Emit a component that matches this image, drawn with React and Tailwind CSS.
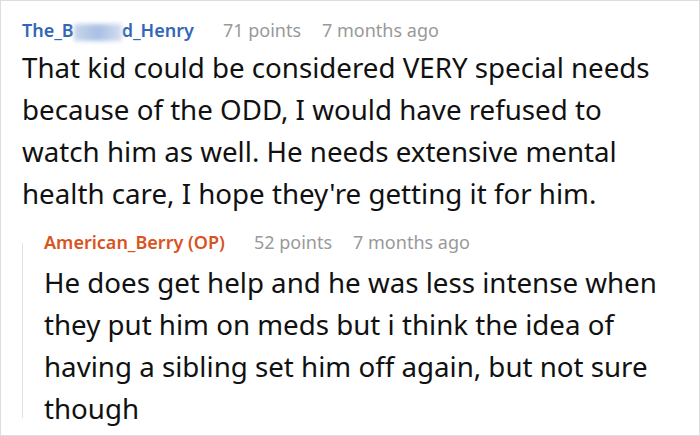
import React from 'react';

const Meta = ({ name, points, time, nameClass }) => (
  <div className="flex items-baseline text-[18px] leading-[24px]">
    <span className={`font-semibold ${nameClass}`}>{name}</span>
    <span className="ml-[29px] text-[#999999]">{points}</span>
    <span className="ml-[21px] text-[#999999]">{time}</span>
  </div>
);

export default function App() {
  return (
    <div
      className="w-[700px] h-[436px] border border-[#dddddd] bg-white text-[#111111] overflow-hidden"
      style={{ fontFamily: '"Noto Sans", "Open Sans", sans-serif' }}
    >
      <div className="pl-[21px] pr-[28px] pt-[17px]">
        <Meta
          name={
            <span>
              The_B
              <span className="inline-block w-[48px] h-[17px] align-middle bg-gradient-to-r from-[#c9d6ec] via-[#a9bfe3] to-[#d5dff0] blur-[2px]" />
              d_Henry
            </span>
          }
          points="71 points"
          time="7 months ago"
          nameClass="text-[#3466b6]"
        />
        <p className="mt-[4px] text-[27.7px] leading-[42px]">
          That kid could be considered VERY special needs because of the ODD, I would have refused to
          watch him as well. He needs extensive mental health care, I hope they're getting it for him.
        </p>
      </div>
      <div className="flex ml-[21px] mt-[16px] pr-[28px]">
        <div className="w-px shrink-0 mt-[13px] h-[175px] bg-[#e2e2e2]" />
        <div className="ml-[21px]">
          <Meta
            name="American_Berry (OP)"
            points="52 points"
            time="7 months ago"
            nameClass="text-[#d9531e]"
          />
          <p className="mt-[7px] text-[27.7px] leading-[42px]">
            He does get help and he was less intense when they put him on meds but i think the idea of
            having a sibling set him off again, but not sure though
          </p>
        </div>
      </div>
    </div>
  );
}
